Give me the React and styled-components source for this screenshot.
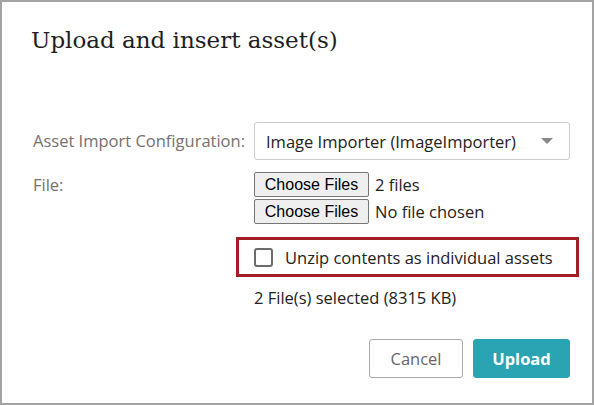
import React from 'react';
import styled, { createGlobalStyle } from 'styled-components';

const GlobalStyle = createGlobalStyle`
  html, body {
    margin: 0;
    padding: 0;
    background: #fff;
  }
  body {
    font-family: "Open Sans", "Noto Sans", sans-serif;
  }
`;

export default function App() {
  return (
    <>
      <GlobalStyle />
      <Frame>
        <Title>Upload and insert asset(s)</Title>
        <Form>
          <Label>Asset Import Configuration:</Label>
          <Select>
            <span>Image Importer (ImageImporter)</span>
            <Caret />
          </Select>

          <Label $top>File:</Label>
          <FileStack>
            <FileRow>
              <NativeButton>Choose Files</NativeButton>
              <FileText>2 files</FileText>
            </FileRow>
            <FileRow>
              <NativeButton>Choose Files</NativeButton>
              <FileText>No file chosen</FileText>
            </FileRow>
          </FileStack>

          <span />
          <Highlight>
            <Checkbox />
            <CheckText>Unzip contents as individual assets</CheckText>
          </Highlight>

          <span />
          <Summary>2 File(s) selected (8315 KB)</Summary>
        </Form>
        <Footer>
          <CancelButton>Cancel</CancelButton>
          <UploadButton>Upload</UploadButton>
        </Footer>
      </Frame>
    </>
  );
}

const Frame = styled.div`
  box-sizing: border-box;
  width: 594px;
  height: 405px;
  border: 2px solid #a3a3a3;
  padding: 0 22px 0 31px;
  display: flex;
  flex-direction: column;
`;

const Title = styled.h1`
  margin: 22px 0 0 -2px;
  font-family: "DejaVu Serif", "Liberation Serif", serif;
  font-weight: normal;
  font-size: 23px;
  line-height: 32px;
  color: #1e1e1e;
`;

const Form = styled.div`
  margin-top: 66px;
  display: grid;
  grid-template-columns: 221px 1fr;
  align-items: start;
  row-gap: 12px;
  font-size: 16.5px;
`;

const Label = styled.div`
  line-height: 20px;
  color: #76706e;
  padding-top: ${p => (p.$top ? '3px' : '9px')};
`;

const Select = styled.div`
  box-sizing: border-box;
  height: 38px;
  border: 1px solid #cccccc;
  border-radius: 3px;
  display: flex;
  align-items: center;
  justify-content: space-between;
  padding: 0 16px 0 11px;
  color: #222;
`;

const Caret = styled.span`
  width: 0;
  height: 0;
  border-left: 6px solid transparent;
  border-right: 6px solid transparent;
  border-top: 6px solid #888;
`;

const FileStack = styled.div`
  display: flex;
  flex-direction: column;
  gap: 2px;
`;

const FileRow = styled.div`
  display: flex;
  align-items: center;
  gap: 6px;
`;

const NativeButton = styled.span`
  box-sizing: border-box;
  height: 25px;
  width: 115px;
  display: inline-flex;
  align-items: center;
  justify-content: center;
  background: #efefef;
  border: 1px solid #767676;
  border-radius: 2px;
  font-family: "Liberation Sans", Arial, sans-serif;
  font-size: 16px;
  color: #000;
`;

const FileText = styled.span`
  color: #222;
`;

const Highlight = styled.div`
  box-sizing: border-box;
  margin: 1px -9px 0 -18px;
  height: 40px;
  border: 3px solid #a21d26;
  display: flex;
  align-items: center;
  padding-left: 15px;
  gap: 12px;
`;

const Checkbox = styled.span`
  box-sizing: border-box;
  width: 19px;
  height: 19px;
  border: 2px solid #6b6b6b;
  border-radius: 3px;
`;

const CheckText = styled.span`
  color: #222;
`;

const Summary = styled.div`
  margin-top: -3px;
  color: #222;
`;

const Footer = styled.div`
  margin-top: auto;
  margin-bottom: 25px;
  display: flex;
  justify-content: flex-end;
  gap: 10px;
`;

const BaseButton = styled.button`
  box-sizing: border-box;
  height: 39px;
  border-radius: 3px;
  font-family: "Open Sans", "Noto Sans", sans-serif;
  font-size: 16.5px;
  padding: 0;
  cursor: pointer;
`;

const CancelButton = styled(BaseButton)`
  width: 94px;
  background: #fff;
  border: 1px solid #a8a8a8;
  color: #666;
`;

const UploadButton = styled(BaseButton)`
  width: 97px;
  background: #2aa3b3;
  border: 1px solid #2aa3b3;
  color: #fff;
  font-weight: bold;
`;
